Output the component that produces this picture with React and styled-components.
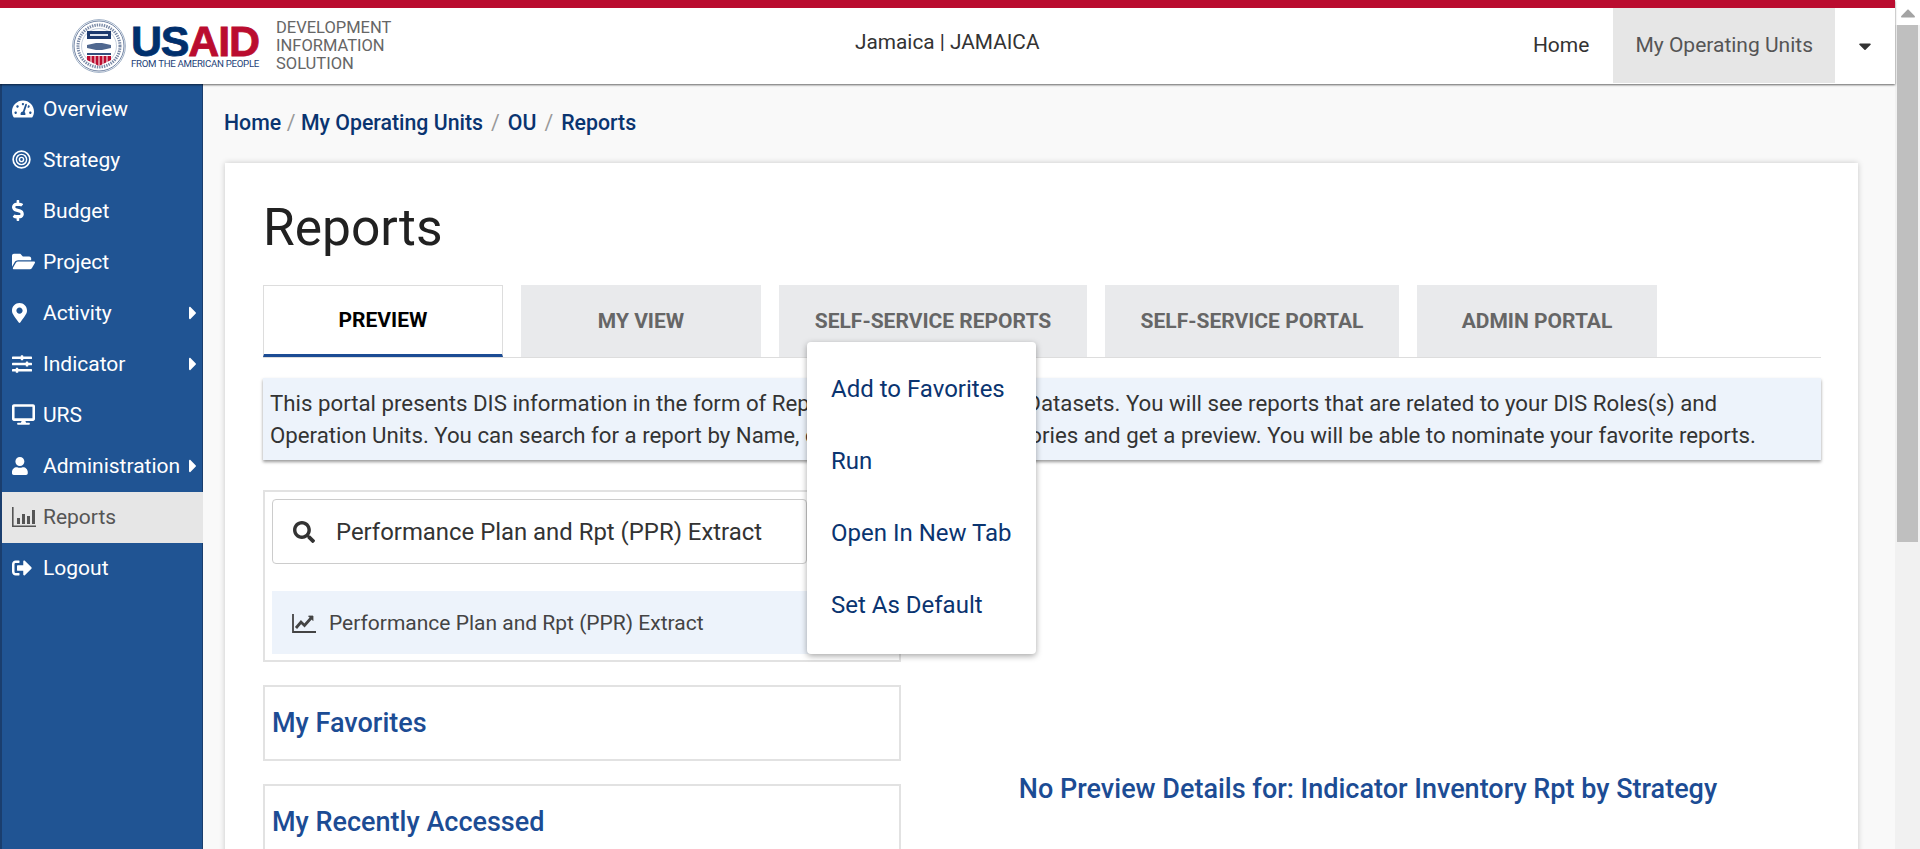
import styled, { createGlobalStyle } from "styled-components";
import {
  FaTachometerAlt,
  FaDollarSign,
  FaFolderOpen,
  FaMapMarkerAlt,
  FaSlidersH,
  FaDesktop,
  FaUser,
  FaSignOutAlt,
  FaCaretRight,
  FaCaretDown,
  FaCaretUp,
  FaSearch,
} from "react-icons/fa";

const Target = () => (
  <svg width="19" height="19" viewBox="0 0 20 20" fill="none" stroke="currentColor">
    <circle cx="10" cy="10" r="8.8" strokeWidth="1.8" />
    <circle cx="10" cy="10" r="5.4" strokeWidth="1.5" />
    <circle cx="10" cy="10" r="2.2" strokeWidth="1.5" />
  </svg>
);

const BarChart = () => (
  <svg width="24" height="20" viewBox="0 0 24 20" fill="currentColor">
    <path d="M0.8 0 V19.2 H24" fill="none" stroke="currentColor" strokeWidth="1.6" />
    <rect x="5" y="11" width="3" height="6" />
    <rect x="10" y="7" width="3" height="10" />
    <rect x="15" y="9" width="3" height="8" />
    <rect x="20" y="3" width="3" height="14" />
  </svg>
);

const LineChart = () => (
  <svg width="24" height="20" viewBox="0 0 24 20" fill="none" stroke="currentColor">
    <path d="M1 1 V19 H24" strokeWidth="1.8" />
    <path d="M4 15 L9 9 L12.5 12.5 L20 4" strokeWidth="2.8" />
    <path d="M16.5 3 H21 V7.5 Z" fill="currentColor" strokeWidth="0.8" />
  </svg>
);

const Seal = () => (
  <svg width="54" height="54" viewBox="0 0 54 54">
    <circle cx="27" cy="27" r="26.4" fill="#fff" stroke="#9fb0c6" strokeWidth="1" />
    <circle cx="27" cy="27" r="25" fill="none" stroke="#36507c" strokeWidth="0.7" />
    <circle cx="27" cy="27" r="17.5" fill="none" stroke="#9fb0c6" strokeWidth="0.6" />
    <circle cx="27" cy="27" r="21" fill="none" stroke="#4c6288" strokeWidth="3" strokeDasharray="1.4 1" opacity="0.75" />
    <rect x="15" y="12" width="24" height="8" fill="#1d3a6e" />
    <rect x="18" y="15" width="18" height="2" fill="#dfe5ef" />
    <path d="M15 26 L24 24 L30 24 L39 26 L39 29 L30 31 L24 31 L15 29 Z" fill="#50688f" />
    <rect x="15" y="34" width="24" height="2" fill="#33507e" />
    <path d="M15 37 H39 V41 L27 47 L15 41 Z" fill="#bb0c2f" />
    <path d="M19 37 V45 M23 37 V46 M27 37 V47 M31 37 V46 M35 37 V45" stroke="#fff" strokeWidth="1" />
  </svg>
);

// keep the glyphs flush left in their box, as the icon font did
const left = "xMinYMid meet";

const sideItems = [
  { label: "Overview", icon: <FaTachometerAlt size={22} preserveAspectRatio={left} /> },
  { label: "Strategy", icon: <Target /> },
  { label: "Budget", icon: <FaDollarSign size={21} preserveAspectRatio={left} /> },
  { label: "Project", icon: <FaFolderOpen size={23} preserveAspectRatio={left} /> },
  { label: "Activity", icon: <FaMapMarkerAlt size={20} preserveAspectRatio={left} />, more: true },
  { label: "Indicator", icon: <FaSlidersH size={20} preserveAspectRatio={left} />, more: true },
  { label: "URS", icon: <FaDesktop size={23} preserveAspectRatio={left} /> },
  { label: "Administration", icon: <FaUser size={18} preserveAspectRatio={left} />, more: true },
  { label: "Reports", icon: <BarChart />, active: true },
  { label: "Logout", icon: <FaSignOutAlt size={20} preserveAspectRatio={left} /> },
];

const tabs = [
  { label: "Preview", width: 240 },
  { label: "My View", width: 240 },
  { label: "Self-Service Reports", width: 308 },
  { label: "Self-Service Portal", width: 294 },
  { label: "Admin Portal", width: 240 },
];
const menuItems = ["Add to Favorites", "Run", "Open In New Tab", "Set As Default"];

const App = () => {
  return (
    <Page>
      <GlobalStyle />
      <Header>
        <Brand>
          <Seal />
          <LogoWords>
            <LogoName>
              US<LogoRed>AID</LogoRed>
            </LogoName>
            <LogoTag>FROM THE AMERICAN PEOPLE</LogoTag>
          </LogoWords>
          <SystemName>
            DEVELOPMENT
            <br />
            INFORMATION
            <br />
            SOLUTION
          </SystemName>
        </Brand>
        <Country>Jamaica | JAMAICA</Country>
        <TopNav>
          <TopLink>Home</TopLink>
          <TopLink $active>My Operating Units</TopLink>
          <Caret>
            <FaCaretDown size={20} />
          </Caret>
        </TopNav>
      </Header>
      <Body>
        <Sidebar>
          {sideItems.map((item) => (
            <SideItem key={item.label} $active={item.active}>
              <SideIcon>{item.icon}</SideIcon>
              <span>{item.label}</span>
              {item.more && (
                <SideMore>
                  <FaCaretRight size={22} />
                </SideMore>
              )}
            </SideItem>
          ))}
        </Sidebar>
        <Main>
          <Crumbs>
            <Crumb>Home</Crumb>
            <CrumbSep $tight>/</CrumbSep>
            <Crumb>My Operating Units</Crumb>
            <CrumbSep>/</CrumbSep>
            <Crumb>OU</Crumb>
            <CrumbSep>/</CrumbSep>
            <Crumb>Reports</Crumb>
          </Crumbs>
          <Card>
            <Title>Reports</Title>
            <Tabs>
              {tabs.map((tab, i) => (
                <Tab key={tab.label} $active={i === 0} $width={tab.width}>
                  {tab.label}
                </Tab>
              ))}
              <Menu>
                {menuItems.map((item) => (
                  <MenuItem key={item}>{item}</MenuItem>
                ))}
              </Menu>
            </Tabs>
            <Info>
              This portal presents DIS information in the form of Reports, Dashboards and Datasets. You will see reports that are related to your DIS
              Roles(s) and Operation Units. You can search for a report by Name, or browse report categories and get a preview. You will be able to
              nominate your favorite reports.
            </Info>
            <Columns>
              <LeftCol>
                <SearchPanel>
                  <SearchBox>
                    <FaSearch size={22} />
                    <span>Performance Plan and Rpt (PPR) Extract</span>
                  </SearchBox>
                  <ResultRow>
                    <LineChart />
                    <span>Performance Plan and Rpt (PPR) Extract</span>
                  </ResultRow>
                </SearchPanel>
                <Section>My Favorites</Section>
                <Section>My Recently Accessed</Section>
              </LeftCol>
              <Preview>No Preview Details for: Indicator Inventory Rpt by Strategy</Preview>
            </Columns>
          </Card>
        </Main>
      </Body>
      <Scrollbar>
        <ScrollUp>
          <FaCaretUp size={24} />
        </ScrollUp>
        <ScrollThumb />
      </Scrollbar>
    </Page>
  );
};

const GlobalStyle = createGlobalStyle`
  html, body {
    height: 100%;
    overflow: hidden;
  }
  body {
    margin: 0;
    font-family: Roboto, "Liberation Sans", sans-serif;
    background: #f9f9f9;
  }
`;
const Page = styled.div`
  display: flex;
  flex-direction: column;
  height: 100vh;
  padding-right: 25px;
  box-sizing: border-box;
  overflow: hidden;
  position: relative;
`;
const Scrollbar = styled.div`
  position: absolute;
  top: 0;
  right: 0;
  bottom: 0;
  width: 25px;
  background: #f1f1f1;
  display: flex;
  flex-direction: column;
  align-items: center;
`;
const ScrollUp = styled.div`
  height: 25px;
  width: 100%;
  display: flex;
  align-items: center;
  justify-content: center;
  color: #a3a3a3;
  background: #fff;
`;
const ScrollThumb = styled.div`
  width: 21px;
  height: 517px;
  background: #bfbfbf;
`;
const Header = styled.header`
  height: 76px;
  flex-shrink: 0;
  border-top: 8px solid #ba0c2f;
  background: #fff;
  display: flex;
  align-items: center;
  box-shadow: 0 1px 2px rgba(0, 0, 0, 0.6);
  position: relative;
  z-index: 2;
`;
const Brand = styled.div`
  display: flex;
  align-items: center;
  width: 855px;
  padding-left: 72px;
  box-sizing: border-box;
`;
const LogoWords = styled.div`
  display: flex;
  flex-direction: column;
  margin-left: 5px;
  width: 128px;
`;
const LogoName = styled.div`
  font-family: "Liberation Sans", sans-serif;
  font-weight: 700;
  font-size: 43px;
  line-height: 34px;
  letter-spacing: -1.2px;
  color: #002f6c;
  -webkit-text-stroke: 0.8px currentColor;
`;
const LogoRed = styled.span`
  color: #ba0c2f;
`;
const LogoTag = styled.div`
  font-size: 9.7px;
  line-height: 11px;
  letter-spacing: -0.3px;
  color: #1d3f78;
  white-space: nowrap;
`;
const SystemName = styled.div`
  margin-left: 17px;
  font-size: 16.5px;
  line-height: 18px;
  color: #666;
`;
const Country = styled.div`
  font-size: 20.8px;
  color: #333;
  position: relative;
  top: -4px;
`;
const TopNav = styled.nav`
  margin-left: auto;
  display: flex;
  align-items: stretch;
  height: 100%;
  padding-bottom: 1px;
  box-sizing: border-box;
`;
const TopLink = styled.a`
  display: flex;
  align-items: center;
  padding: 0 ${(p) => (p.$active ? "22px" : "24px")} 1px 22px;
  font-size: 21px;
  color: ${(p) => (p.$active ? "#555" : "#333")};
  background: ${(p) => (p.$active ? "#e6e6e6" : "transparent")};
`;
const Caret = styled.div`
  width: 60px;
  display: flex;
  align-items: center;
  justify-content: center;
  color: #333;
`;
const Body = styled.div`
  flex: 1;
  display: flex;
  min-height: 0;
`;
const Sidebar = styled.aside`
  width: 203px;
  flex-shrink: 0;
  background: #205493;
  border-left: 2px solid #1a3e6e;
  border-right: 1px solid #1a3e6e;
  box-sizing: border-box;
`;
const SideItem = styled.div`
  height: 51px;
  box-sizing: border-box;
  display: flex;
  align-items: center;
  font-size: 21px;
  color: ${(p) => (p.$active ? "#555" : "#fff")};
  background: ${(p) => (p.$active ? "#e6e6e6" : "transparent")};
  margin-right: ${(p) => (p.$active ? "-1px" : "0")};
  padding: 0 0 2px 10px;
`;
const SideIcon = styled.span`
  width: 31px;
  flex-shrink: 0;
  display: flex;
  align-items: center;
`;
const SideMore = styled.span`
  margin-left: auto;
  margin-right: 5px;
  display: flex;
  svg {
    width: 8px;
  }
`;
const Main = styled.main`
  flex: 1;
  min-width: 0;
  padding: 0 37px 0 22px;
`;
const Crumbs = styled.div`
  height: 79px;
  margin-left: -1px;
  display: flex;
  align-items: center;
  font-size: 21.3px;
  padding-bottom: 2px;
  box-sizing: border-box;
`;
const Crumb = styled.a`
  color: #0a3470;
  font-weight: 500;
`;
const CrumbSep = styled.span`
  color: #999;
  padding: 0 ${(p) => (p.$tight ? "5.5px" : "8px")};
`;
const Card = styled.section`
  background: #fff;
  box-shadow: 0 0 6px rgba(0, 0, 0, 0.2);
  padding: 34px 37px 40px 38px;
  box-sizing: border-box;
  min-height: 1100px;
`;
const Title = styled.h1`
  margin: 0 0 26px;
  font-size: 51.5px;
  font-weight: 400;
  line-height: 62px;
  color: #212121;
`;
const Tabs = styled.div`
  display: flex;
  gap: 18px;
  border-bottom: 1px solid #ddd;
  position: relative;
`;
const Tab = styled.div`
  width: ${(p) => p.$width}px;
  height: 72px;
  box-sizing: border-box;
  display: flex;
  align-items: center;
  justify-content: center;
  font-size: 21px;
  font-weight: 700;
  text-transform: uppercase;
  color: ${(p) => (p.$active ? "#000" : "#666")};
  background: ${(p) => (p.$active ? "#fff" : "#e9eaec")};
  border: ${(p) => (p.$active ? "1px solid #ddd" : "none")};
  border-bottom: ${(p) => (p.$active ? "3px solid #1c4c94" : "none")};
  padding-bottom: ${(p) => (p.$active ? "0" : "1px")};
`;
const Menu = styled.div`
  position: absolute;
  left: 544px;
  top: 57px;
  width: 229px;
  height: 312px;
  box-sizing: border-box;
  padding: 12px 0;
  background: #fff;
  border-radius: 4px;
  box-shadow: 0 2px 6px rgba(0, 0, 0, 0.35);
  display: flex;
  flex-direction: column;
  z-index: 3;
`;
const MenuItem = styled.div`
  height: 72px;
  display: flex;
  align-items: center;
  padding: 0 0 2px 24px;
  box-sizing: border-box;
  font-size: 24px;
  color: #0a3470;
`;
const Info = styled.div`
  margin-top: 20px;
  background: #edf3fb;
  padding: 9px 7px;
  font-size: 22.25px;
  line-height: 32px;
  color: #333;
  box-shadow: 0 2px 3px rgba(0, 0, 0, 0.4);
`;
const Columns = styled.div`
  display: flex;
  margin-top: 30px;
`;
const LeftCol = styled.div`
  width: 638px;
  flex-shrink: 0;
  display: flex;
  flex-direction: column;
  gap: 23px;
`;
const SearchPanel = styled.div`
  border: 2px solid #e2e2e2;
  padding: 7px;
  height: 172px;
  box-sizing: border-box;
`;
const SearchBox = styled.div`
  width: 535px;
  height: 65px;
  box-sizing: border-box;
  border: 1px solid #ccc;
  border-radius: 4px;
  display: flex;
  align-items: center;
  gap: 21px;
  padding-left: 20px;
  font-size: 23.9px;
  color: #333;
`;
const ResultRow = styled.div`
  margin-top: 27px;
  height: 63px;
  background: #edf3fb;
  display: flex;
  align-items: center;
  gap: 13px;
  padding-left: 20px;
  font-size: 21px;
  color: #444;
`;
const Section = styled.div`
  height: 76px;
  box-sizing: border-box;
  border: 2px solid #e2e2e2;
  padding: 0 7px;
  display: flex;
  align-items: center;
  font-size: 27px;
  font-weight: 500;
  color: #1c4c94;
`;
const Preview = styled.div`
  flex: 1;
  padding: 283px 0 0 14px;
  text-align: center;
  font-size: 27px;
  font-weight: 500;
  color: #1c4c94;
`;
export default App;
